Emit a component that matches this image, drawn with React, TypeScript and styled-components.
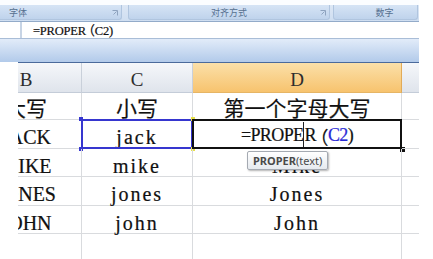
import React from 'react';
import styled, { createGlobalStyle } from 'styled-components';

const GlobalStyle = createGlobalStyle`
  body {
    margin: 0;
    background: #fff;
  }
`;

const Window = styled.div`
  width: 433px;
  height: 259px;
  overflow: hidden;
  background: #fff;
  display: flex;
  flex-direction: column;
`;

const Ribbon = styled.div`
  flex: none;
  width: 419px;
  height: 22px;
  box-sizing: border-box;
  padding-top: 5px;
  display: flex;
  overflow: hidden;
  background: linear-gradient(#fbfdff 0, #fbfdff 5px, #dce7f5 5px, #cfdef1 100%);
  border-bottom: 1px solid #93abc9;
`;

const Group = styled.div<{ $w: number; $gap?: number; $shift?: number; $pad?: number }>`
  flex: none;
  position: relative;
  width: ${(p) => p.$w}px;
  height: 15px;
  box-sizing: border-box;
  margin-left: ${(p) => p.$shift ?? p.$gap ?? 0}px;
  padding-left: ${(p) => p.$pad ?? 0}px;
  display: flex;
  align-items: center;
  justify-content: center;
  background: linear-gradient(#d6e4f5, #bfd3ec);
  border: 1px solid #b0c5df;
  border-top: none;
  border-radius: 0 0 3px 3px;
  font: 9px 'Noto Sans CJK SC', sans-serif;
  color: #56708f;
`;

const Launcher = styled.svg`
  position: absolute;
  right: 3px;
  bottom: 3px;
`;

const FormulaBar = styled.div`
  flex: none;
  width: 419px;
  height: 17px;
  box-sizing: border-box;
  display: flex;
  border-bottom: 1px solid #a9bdd7;
`;

const NameBox = styled.div`
  flex: none;
  width: 20px;
  border-right: 2px solid #c7d4e5;
`;

const FormulaText = styled.div`
  padding-left: 11px;
  padding-top: 1px;
  font: 12.5px/16px 'Liberation Serif', 'Noto Sans CJK SC', serif;
  letter-spacing: -0.2px;
  color: #111;
  white-space: pre;
  -webkit-text-stroke: 0.2px #111;
`;

const Band = styled.div`
  flex: none;
  width: 419px;
  height: 23px;
  background: linear-gradient(#e2ecf9, #b2caea);
`;

const Viewport = styled.div`
  flex: 1;
  width: 401px;
  margin-left: 18px;
  overflow: hidden;
  border-top: 1px solid #4a6a9b;
`;

const Grid = styled.div`
  display: grid;
  margin-left: -47px;
  grid-template-columns: 111px 111px 209px 80px;
  grid-template-rows: 30px 27px 29px 28px 29px 28px 30px;
`;

const HeaderCell = styled.div<{ $active?: boolean }>`
  box-sizing: border-box;
  display: flex;
  align-items: center;
  justify-content: center;
  padding-top: 5px;
  font: 19px 'Liberation Serif', serif;
  color: #2d2d2d;
  background: ${(p) =>
    p.$active
      ? 'linear-gradient(#fbe0a9, #f7c36e)'
      : 'linear-gradient(#f5f7fa, #dfe4ec)'};
  border-right: 1px solid ${(p) => (p.$active ? '#e2ab58' : '#c9d0da')};
  border-bottom: 1px solid ${(p) => (p.$active ? '#e6b565' : '#c4ccd8')};
`;

const Cell = styled.div<{ $cjk?: boolean; $ls?: number }>`
  position: relative;
  box-sizing: border-box;
  display: flex;
  align-items: center;
  justify-content: center;
  white-space: nowrap;
  border-right: 1px solid #d9dbde;
  border-bottom: 1px solid #d9dbde;
  color: #111;
  font-family: 'Liberation Serif', 'Noto Sans CJK SC', serif;
  font-size: ${(p) => (p.$cjk ? 21 : 20)}px;
  letter-spacing: ${(p) => (p.$cjk ? 0 : p.$ls ?? 2)}px;
  padding-top: ${(p) => (p.$cjk ? 1 : 7)}px;
  -webkit-text-stroke: 0.2px #111;
`;

const SelectBox = styled.div`
  position: absolute;
  top: -1px;
  left: -1px;
  right: -1px;
  bottom: -1px;
  border: 2px solid #3636cf;
`;

const Handle = styled.span<{ $x: 'l' | 'r'; $y: 't' | 'b'; $c: string }>`
  position: absolute;
  width: 4px;
  height: 4px;
  background: ${(p) => p.$c};
  ${(p) => (p.$x === 'l' ? 'left: -3px;' : 'right: -3px;')}
  ${(p) => (p.$y === 't' ? 'top: -3px;' : 'bottom: -3px;')}
`;

const EditBox = styled.div`
  position: absolute;
  top: -1px;
  left: -1px;
  right: -1px;
  bottom: -1px;
  border: 2px solid #111;
`;

const FillHandle = styled.span`
  position: absolute;
  right: -4px;
  bottom: -4px;
  width: 5px;
  height: 5px;
  background: #111;
`;

const Formula = styled.span`
  font-size: 18px;
  letter-spacing: -0.6px;
  display: inline-flex;
  align-items: center;
  margin-top: -4px;
`;

const Paren = styled.span<{ $size?: number }>`
  font-size: ${(p) => p.$size ?? 18}px;
  margin-left: -0.3em;
`;

const Ref = styled.span`
  color: #2a2ad6;
  -webkit-text-stroke: 0.2px #2a2ad6;
`;

const Caret = styled.span`
  display: inline-block;
  width: 1px;
  height: 27px;
  background: #222;
`;

const Tooltip = styled.div`
  position: absolute;
  left: 54px;
  top: 31px;
  z-index: 2;
  height: 19px;
  box-sizing: border-box;
  padding: 0 5px;
  display: flex;
  align-items: center;
  font: 11px 'Noto Sans', sans-serif;
  letter-spacing: 0;
  color: #4a4a4a;
  -webkit-text-stroke: 0;
  background: linear-gradient(#ffffff, #e6eaef);
  border: 1px solid #a5aab2;
  border-radius: 2px;
  box-shadow: 1px 1px 2px rgba(0, 0, 0, 0.3);

  b {
    font-weight: 700;
  }
`;

const LauncherIcon = () => (
  <Launcher width="6" height="6" viewBox="0 0 6 6">
    <path d="M0.5 0.5h5v5" fill="none" stroke="#8ea3bf" strokeWidth="1" />
    <path d="M1.5 4.5l3-3" stroke="#8ea3bf" strokeWidth="1" />
  </Launcher>
);

const columns = ['B', 'C', 'D', ''];

const rows: React.ReactNode[][] = [
  ['大写', '小写', '第一个字母大写', ''],
  ['JACK', 'jack', null, ''],
  ['MIKE', 'mike', 'Mike', ''],
  ['JONES', 'jones', 'Jones', ''],
  ['JOHN', 'john', 'John', ''],
  ['', '', '', ''],
];

const App: React.FC = () => {
  const renderCell = (value: React.ReactNode, r: number, c: number) => {
    const key = `${r}-${c}`;
    if (r === 1 && c === 1) {
      return (
        <Cell key={key}>
          {value}
          <SelectBox />
          <Handle $x="l" $y="t" $c="#3636cf" />
          <Handle $x="l" $y="b" $c="#3636cf" />
          <Handle $x="r" $y="t" $c="#e8e04a" />
          <Handle $x="r" $y="b" $c="#e8e04a" />
        </Cell>
      );
    }
    if (r === 1 && c === 2) {
      return (
        <Cell key={key}>
          <Formula>
            =PROPE
            <Caret />
            R<Paren>（</Paren>
            <Ref>C2</Ref>)
          </Formula>
          <EditBox />
          <FillHandle />
          <Tooltip>
            <b>PROPER</b>(text)
          </Tooltip>
        </Cell>
      );
    }
    return (
      <Cell key={key} $cjk={r === 0} $ls={c === 0 ? 0 : 2}>
        {value}
      </Cell>
    );
  };

  return (
    <>
      <GlobalStyle />
      <Window>
        <Ribbon>
          <Group $w={208} $shift={-86}>
            字体
            <LauncherIcon />
          </Group>
          <Group $w={202} $gap={6}>
            对齐方式
            <LauncherIcon />
          </Group>
          <Group $w={85} $gap={3} $pad={18}>
            数字
          </Group>
        </Ribbon>
        <FormulaBar>
          <NameBox />
          <FormulaText>
            =PROPER<Paren $size={13}>（</Paren>C2)
          </FormulaText>
        </FormulaBar>
        <Band />
        <Viewport>
          <Grid>
            {columns.map((col) => (
              <HeaderCell key={col || 'E'} $active={col === 'D'}>
                {col}
              </HeaderCell>
            ))}
            {rows.map((row, r) => row.map((v, c) => renderCell(v, r, c)))}
          </Grid>
        </Viewport>
      </Window>
    </>
  );
};

export default App;
